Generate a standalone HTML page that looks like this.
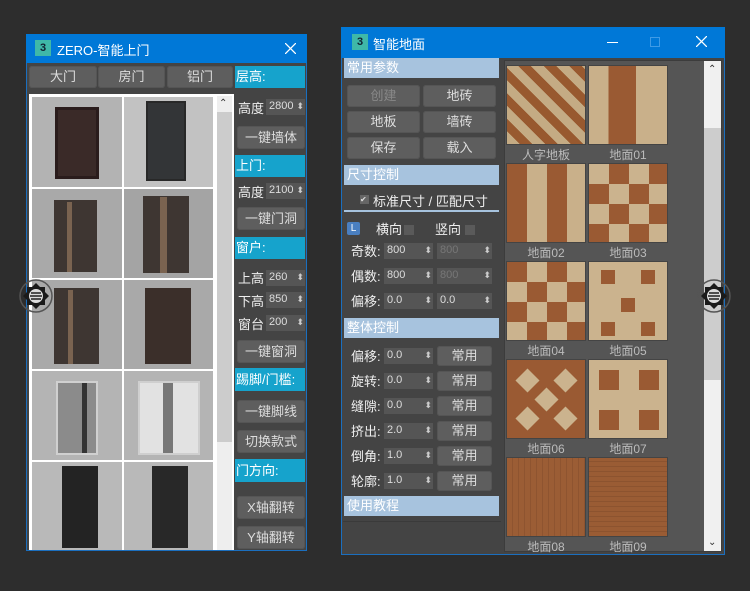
<!DOCTYPE html>
<html><head><meta charset="utf-8"><style>
*{margin:0;padding:0;box-sizing:border-box}
body{width:750px;height:591px;background:#2d2d2d;position:relative;overflow:hidden;font-family:"Liberation Sans","Noto Sans CJK SC",sans-serif;color:#eee;font-size:13px}
.a{position:absolute}
.btn{position:absolute;background:#5e5e5e;border-radius:3px;color:#ddd;text-align:center;font-size:13px;box-shadow:inset 0 0 0 1px #555}
.hdr{position:absolute;background:#16a3cc;color:#fff;font-size:13px;padding-left:1px}
.sp{position:absolute;background:#555;color:#ddd;font-size:11px;padding-left:3px;line-height:15px;height:16px}
.sp:after{content:"⬍";position:absolute;right:1px;top:0;font-size:9px;color:#ccc}
.lbl{position:absolute;font-size:13px;color:#eee}
.bh{position:absolute;background:#a7c3de;color:#fff;font-size:13px;padding-left:3px;line-height:20px;height:20px}
.tile{position:absolute;width:80px;height:80px;border:1px solid #444}
.cap{position:absolute;width:80px;text-align:center;font-size:12px;color:#bbb}
.cell{position:absolute;background:#b4b4b4}
.door{position:absolute}
</style></head><body>

<!-- LEFT WINDOW -->
<div class="a" style="left:26px;top:34px;width:281px;height:517px;background:#444;border:1px solid #1b6fbf"></div>
<div class="a" style="left:26px;top:34px;width:281px;height:29px;background:#0078d7"></div>
<div class="a" style="left:35px;top:40px;width:16px;height:16px;background:#3fb8a8;color:#123;font-size:11px;font-weight:bold;text-align:center;line-height:16px">3</div>
<div class="a" style="left:57px;top:40px;font-size:13px;color:#fff">ZERO-智能上门</div>
<svg class="a" style="left:285px;top:43px" width="11" height="11"><path d="M0 0L11 11M11 0L0 11" stroke="#fff" stroke-width="1.3"/></svg>

<div class="btn" style="left:29px;top:66px;width:68px;height:22px;line-height:22px">大门</div>
<div class="btn" style="left:98px;top:66px;width:67px;height:22px;line-height:22px">房门</div>
<div class="btn" style="left:167px;top:66px;width:66px;height:22px;line-height:22px">铝门</div>

<div class="a" style="left:29px;top:94px;width:205px;height:456px;background:#fff"></div>
<div class="a" style="left:217px;top:96px;width:15px;height:454px;background:#eee"></div>
<div class="a" style="left:217px;top:112px;width:15px;height:330px;background:#ccc"></div>
<div class="a" style="left:219px;top:98px;font-size:10px;color:#333">⌃</div>

<div class="cell" style="left:32px;top:97px;width:90px;height:90px;background:#b3b3b3"></div>
<div class="cell" style="left:124px;top:97px;width:89px;height:90px;background:#c2c2c2"></div>
<div class="door" style="left:55px;top:107px;width:44px;height:72px;background:#3a2a28;border:3px solid #2a1c1c"></div>
<div class="door" style="left:146px;top:101px;width:40px;height:80px;background:#333537;border:2px solid #282828"></div>

<div class="cell" style="left:32px;top:189px;width:90px;height:89px;background:#a9a9a9"></div>
<div class="cell" style="left:124px;top:189px;width:89px;height:89px;background:#a4a4a4"></div>
<div class="door" style="left:54px;top:200px;width:43px;height:72px;background:#3e3632"></div>
<div class="door" style="left:67px;top:202px;width:5px;height:70px;background:#7a6350"></div>
<div class="door" style="left:143px;top:196px;width:46px;height:77px;background:#3e3632"></div>
<div class="door" style="left:160px;top:197px;width:7px;height:76px;background:#7a6350"></div>

<div class="cell" style="left:32px;top:280px;width:90px;height:89px;background:#a9a9a9"></div>
<div class="cell" style="left:124px;top:280px;width:89px;height:89px;background:#a9a9a9"></div>
<div class="door" style="left:54px;top:288px;width:45px;height:76px;background:#3e3632"></div>
<div class="door" style="left:68px;top:290px;width:5px;height:74px;background:#7a6350"></div>
<div class="door" style="left:145px;top:288px;width:46px;height:76px;background:#3b2f2a"></div>

<div class="cell" style="left:32px;top:371px;width:90px;height:89px;background:#b4b4b4"></div>
<div class="cell" style="left:124px;top:371px;width:89px;height:89px;background:#b4b4b4"></div>
<div class="door" style="left:56px;top:381px;width:42px;height:74px;background:#8b8b8b;border:2px solid #d0d0d0"></div>
<div class="door" style="left:82px;top:383px;width:5px;height:70px;background:#333"></div>
<div class="door" style="left:138px;top:381px;width:62px;height:74px;background:#e2e2e2;border:2px solid #cfcfcf"></div>
<div class="door" style="left:163px;top:383px;width:10px;height:70px;background:#777"></div>

<div class="cell" style="left:32px;top:462px;width:90px;height:88px;background:#b9b9b9"></div>
<div class="cell" style="left:124px;top:462px;width:89px;height:88px;background:#b9b9b9"></div>
<div class="door" style="left:62px;top:466px;width:36px;height:82px;background:#232323"></div>
<div class="door" style="left:152px;top:466px;width:36px;height:82px;background:#282828"></div>

<div class="hdr" style="left:235px;top:66px;width:70px;height:22px;line-height:22px">层高:</div>
<div class="lbl" style="left:238px;top:98px">高度</div><div class="sp" style="left:266px;top:99px;width:39px">2800</div>
<div class="btn" style="left:237px;top:126px;width:68px;height:23px;line-height:23px">一键墙体</div>
<div class="hdr" style="left:235px;top:155px;width:70px;height:22px;line-height:22px">上门:</div>
<div class="lbl" style="left:238px;top:182px">高度</div><div class="sp" style="left:266px;top:183px;width:39px">2100</div>
<div class="btn" style="left:237px;top:207px;width:68px;height:23px;line-height:23px">一键门洞</div>
<div class="hdr" style="left:235px;top:237px;width:70px;height:22px;line-height:22px">窗户:</div>
<div class="lbl" style="left:238px;top:268px">上高</div><div class="sp" style="left:266px;top:270px;width:39px">260</div>
<div class="lbl" style="left:238px;top:291px">下高</div><div class="sp" style="left:266px;top:292px;width:39px">850</div>
<div class="lbl" style="left:238px;top:314px">窗台</div><div class="sp" style="left:266px;top:315px;width:39px">200</div>
<div class="btn" style="left:237px;top:340px;width:68px;height:23px;line-height:23px">一键窗洞</div>
<div class="hdr" style="left:235px;top:368px;width:70px;height:23px;line-height:23px">踢脚/门槛:</div>
<div class="btn" style="left:237px;top:400px;width:68px;height:23px;line-height:23px">一键脚线</div>
<div class="btn" style="left:237px;top:430px;width:68px;height:23px;line-height:23px">切换款式</div>
<div class="hdr" style="left:235px;top:459px;width:70px;height:23px;line-height:23px">门方向:</div>
<div class="btn" style="left:237px;top:496px;width:68px;height:23px;line-height:23px">X轴翻转</div>
<div class="btn" style="left:237px;top:526px;width:68px;height:23px;line-height:23px">Y轴翻转</div>

<!-- RIGHT WINDOW -->
<div class="a" style="left:341px;top:27px;width:384px;height:528px;background:#444;border:1px solid #1b6fbf"></div>
<div class="a" style="left:341px;top:27px;width:384px;height:31px;background:#0078d7"></div>
<div class="a" style="left:352px;top:34px;width:16px;height:16px;background:#3fb8a8;color:#123;font-size:11px;font-weight:bold;text-align:center;line-height:16px">3</div>
<div class="a" style="left:373px;top:34px;font-size:13px;color:#fff">智能地面</div>
<div class="a" style="left:607px;top:42px;width:11px;height:1px;background:#fff"></div>
<div class="a" style="left:650px;top:37px;width:10px;height:10px;border:1px solid #3f9be6"></div>
<svg class="a" style="left:696px;top:36px" width="11" height="11"><path d="M0 0L11 11M11 0L0 11" stroke="#fff" stroke-width="1.3"/></svg>

<div class="a" style="left:343px;top:58px;width:158px;height:464px;border-bottom:1px solid #3a3a3a"></div>
<div class="bh" style="left:344px;top:58px;width:155px">常用参数</div>
<div class="btn" style="left:347px;top:85px;width:73px;height:22px;line-height:22px;color:#888">创建</div>
<div class="btn" style="left:423px;top:85px;width:73px;height:22px;line-height:22px">地砖</div>
<div class="btn" style="left:347px;top:111px;width:73px;height:22px;line-height:22px">地板</div>
<div class="btn" style="left:423px;top:111px;width:73px;height:22px;line-height:22px">墙砖</div>
<div class="btn" style="left:347px;top:137px;width:73px;height:22px;line-height:22px">保存</div>
<div class="btn" style="left:423px;top:137px;width:73px;height:22px;line-height:22px">载入</div>
<div class="bh" style="left:344px;top:165px;width:155px">尺寸控制</div>
<div class="a" style="left:360px;top:195px;width:9px;height:9px;background:#666;color:#ddd;font-size:8px;line-height:9px">✔</div>
<div class="lbl" style="left:373px;top:191px">标准尺寸 / 匹配尺寸</div>
<div class="a" style="left:344px;top:210px;width:155px;height:2px;background:#a7c3de"></div>
<div class="a" style="left:347px;top:222px;width:13px;height:13px;background:#4a7fc0;border-radius:2px;color:#fff;font-size:10px;text-align:center;line-height:13px">L</div>
<div class="lbl" style="left:376px;top:219px">横向</div>
<div class="a" style="left:404px;top:225px;width:10px;height:10px;background:#5a5a5a"></div>
<div class="lbl" style="left:435px;top:219px">竖向</div>
<div class="a" style="left:465px;top:225px;width:10px;height:10px;background:#5a5a5a"></div>

<div class="lbl" style="left:351px;top:241px">奇数:</div><div class="sp" style="left:384px;top:243px;width:49px">800</div><div class="sp" style="left:437px;top:243px;width:55px;color:#777">800</div>
<div class="lbl" style="left:351px;top:266px">偶数:</div><div class="sp" style="left:384px;top:268px;width:49px">800</div><div class="sp" style="left:437px;top:268px;width:55px;color:#777">800</div>
<div class="lbl" style="left:351px;top:291px">偏移:</div><div class="sp" style="left:384px;top:293px;width:49px">0.0</div><div class="sp" style="left:437px;top:293px;width:55px">0.0</div>

<div class="bh" style="left:344px;top:318px;width:155px">整体控制</div>
<div class="lbl" style="left:351px;top:346px">偏移:</div><div class="sp" style="left:384px;top:348px;width:49px">0.0</div><div class="btn" style="left:437px;top:346px;width:55px;height:20px;line-height:20px">常用</div>
<div class="lbl" style="left:351px;top:371px">旋转:</div><div class="sp" style="left:384px;top:373px;width:49px">0.0</div><div class="btn" style="left:437px;top:371px;width:55px;height:20px;line-height:20px">常用</div>
<div class="lbl" style="left:351px;top:396px">缝隙:</div><div class="sp" style="left:384px;top:398px;width:49px">0.0</div><div class="btn" style="left:437px;top:396px;width:55px;height:20px;line-height:20px">常用</div>
<div class="lbl" style="left:351px;top:421px">挤出:</div><div class="sp" style="left:384px;top:423px;width:49px">2.0</div><div class="btn" style="left:437px;top:421px;width:55px;height:20px;line-height:20px">常用</div>
<div class="lbl" style="left:351px;top:446px">倒角:</div><div class="sp" style="left:384px;top:448px;width:49px">1.0</div><div class="btn" style="left:437px;top:446px;width:55px;height:20px;line-height:20px">常用</div>
<div class="lbl" style="left:351px;top:471px">轮廓:</div><div class="sp" style="left:384px;top:473px;width:49px">1.0</div><div class="btn" style="left:437px;top:471px;width:55px;height:20px;line-height:20px">常用</div>
<div class="bh" style="left:344px;top:496px;width:155px">使用教程</div>

<div class="a" style="left:504px;top:60px;width:218px;height:492px;background:#555;border:1px solid #3c3c3c"></div>
<div class="a" style="left:704px;top:61px;width:17px;height:490px;background:#f0f0f0"></div>
<div class="a" style="left:704px;top:128px;width:17px;height:252px;background:#cdcdcd"></div>
<div class="a" style="left:708px;top:64px;font-size:10px;color:#333">⌃</div>
<div class="a" style="left:708px;top:537px;font-size:10px;color:#333">⌄</div>

<div class="tile" style="left:506px;top:65px;background:repeating-linear-gradient(45deg,#c4ab84 0 9px,#98592f 9px 18px)"></div>
<div class="tile" style="left:588px;top:65px;background:linear-gradient(90deg,#c9b08a 0 25%,#9a5a33 25% 60%,#c9b08a 60%)"></div>
<div class="cap" style="left:506px;top:146px">人字地板</div><div class="cap" style="left:588px;top:146px">地面01</div>

<div class="tile" style="left:506px;top:163px;background:repeating-linear-gradient(90deg,#9a5a33 0 20px,#c9b08a 20px 40px)"></div>
<div class="tile" style="left:588px;top:163px;background:repeating-conic-gradient(#9a5a33 0 25%,#cbb38e 0 50%) 0 0/40px 40px"></div>
<div class="cap" style="left:506px;top:244px">地面02</div><div class="cap" style="left:588px;top:244px">地面03</div>

<div class="tile" style="left:506px;top:261px;background:repeating-conic-gradient(#cbb38e 0 25%,#9a5a33 0 50%) 0 0/40px 40px"></div>
<div class="tile" style="left:588px;top:261px;background:#cbb38e"><div class="a" style="left:12px;top:8px;width:14px;height:14px;background:#9a5a33"></div><div class="a" style="left:52px;top:8px;width:14px;height:14px;background:#9a5a33"></div><div class="a" style="left:32px;top:36px;width:14px;height:14px;background:#9a5a33"></div><div class="a" style="left:12px;top:60px;width:14px;height:14px;background:#9a5a33"></div><div class="a" style="left:52px;top:60px;width:14px;height:14px;background:#9a5a33"></div></div>
<div class="cap" style="left:506px;top:342px">地面04</div><div class="cap" style="left:588px;top:342px">地面05</div>

<div class="tile" style="left:506px;top:359px;background:#9a5a33;overflow:hidden"><div class="a" style="left:12px;top:12px;width:17px;height:17px;background:#cbb38e;transform:rotate(45deg)"></div><div class="a" style="left:50px;top:12px;width:17px;height:17px;background:#cbb38e;transform:rotate(45deg)"></div><div class="a" style="left:31px;top:31px;width:17px;height:17px;background:#cbb38e;transform:rotate(45deg)"></div><div class="a" style="left:12px;top:50px;width:17px;height:17px;background:#cbb38e;transform:rotate(45deg)"></div><div class="a" style="left:50px;top:50px;width:17px;height:17px;background:#cbb38e;transform:rotate(45deg)"></div></div>
<div class="tile" style="left:588px;top:359px;background:#cbb38e"><div class="a" style="left:10px;top:10px;width:20px;height:20px;background:#9a5a33"></div><div class="a" style="left:50px;top:10px;width:20px;height:20px;background:#9a5a33"></div><div class="a" style="left:10px;top:50px;width:20px;height:20px;background:#9a5a33"></div><div class="a" style="left:50px;top:50px;width:20px;height:20px;background:#9a5a33"></div></div>
<div class="cap" style="left:506px;top:440px">地面06</div><div class="cap" style="left:588px;top:440px">地面07</div>

<div class="tile" style="left:506px;top:457px;background:repeating-linear-gradient(90deg,#9b5d35 0 5px,#8e5430 5px 6px)"></div>
<div class="tile" style="left:588px;top:457px;background:repeating-linear-gradient(0deg,#9a5c34 0 4px,#8c532f 4px 5px)"></div>
<div class="cap" style="left:506px;top:538px">地面08</div><div class="cap" style="left:588px;top:538px">地面09</div>

<svg class="a" style="left:19px;top:279px" width="34" height="34" viewBox="0 0 34 34"><circle cx="17" cy="17" r="16" fill="none" stroke="#555" stroke-width="1.5"/><path d="M17 4l4 4h5v5l4 4-4 4v5h-5l-4 4-4-4H8v-5l-4-4 4-4V8h5z" fill="#1a1a1a"/><circle cx="17" cy="17" r="7" fill="#ddd"/><path d="M12 14h10M11 17h12M12 20h10" stroke="#222" stroke-width="1.5"/></svg>
<svg class="a" style="left:697px;top:279px" width="34" height="34" viewBox="0 0 34 34"><circle cx="17" cy="17" r="16" fill="none" stroke="#555" stroke-width="1.5"/><path d="M17 4l4 4h5v5l4 4-4 4v5h-5l-4 4-4-4H8v-5l-4-4 4-4V8h5z" fill="#1a1a1a"/><circle cx="17" cy="17" r="7" fill="#ddd"/><path d="M12 14h10M11 17h12M12 20h10" stroke="#222" stroke-width="1.5"/></svg>
</body></html>
